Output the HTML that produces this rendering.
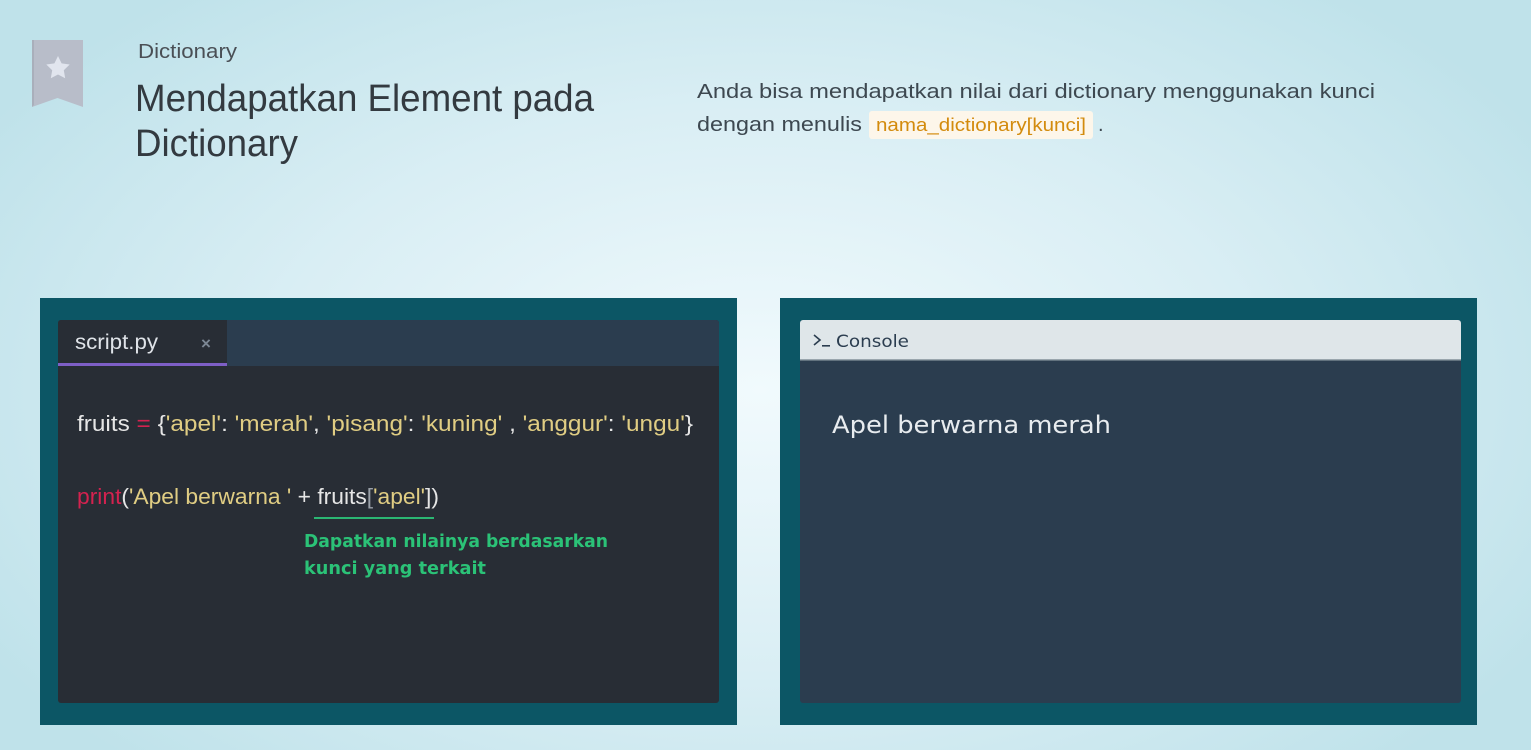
<!DOCTYPE html>
<html><head><meta charset="utf-8"><style>
html,body{margin:0;padding:0}
body{width:1531px;height:750px;overflow:hidden;position:relative;font-family:"Liberation Sans",sans-serif;
background:radial-gradient(ellipse 900px 520px at 760px 390px,#f1fafd 0%,#d9eef4 55%,#bfe2ea 100%);}
.abs{position:absolute}
</style></head><body>
<svg class="abs" style="left:0;top:0" width="1531" height="750">
  <!-- bookmark -->
  <path d="M32 40H83V107L57.5 98L32 107Z" fill="#b8bdc9"/>
  <path d="M32 40H34V105L32 107Z" fill="#a9afbb"/>
  <path d="M58 56l3.6 7.4 8.1 1.1-5.9 5.7 1.4 8.1-7.2-3.8-7.2 3.8 1.4-8.1-5.9-5.7 8.1-1.1z" fill="#e1e5ee"/>
  <text x="138" y="58" font-family="Liberation Sans" font-size="20" fill="#4a4f55" textLength="99" lengthAdjust="spacingAndGlyphs">Dictionary</text>
  <text x="135" y="111" font-family="Liberation Sans" font-size="38" fill="#333a40" textLength="459" lengthAdjust="spacingAndGlyphs">Mendapatkan Element pada</text>
  <text x="135" y="156" font-family="Liberation Sans" font-size="38" fill="#333a40" textLength="163" lengthAdjust="spacingAndGlyphs">Dictionary</text>
  <text x="697" y="98" font-family="Liberation Sans" font-size="20" fill="#3d4850" textLength="678" lengthAdjust="spacingAndGlyphs">Anda bisa mendapatkan nilai dari dictionary menggunakan kunci</text>
  <text x="697" y="131" font-family="Liberation Sans" font-size="20" fill="#3d4850" textLength="165" lengthAdjust="spacingAndGlyphs">dengan menulis</text>
  <rect x="869" y="111" width="224" height="28" rx="3" fill="#fdf6ea"/>
  <text x="876" y="131" font-family="Liberation Sans" font-size="18" fill="#d38b0d" textLength="210" lengthAdjust="spacingAndGlyphs">nama_dictionary[kunci]</text>
  <text x="1098" y="131" font-family="Liberation Sans" font-size="20" fill="#3d4850">.</text>

  <!-- left panel -->
  <rect x="40" y="298" width="697" height="427" fill="#0c5665"/>
  <rect x="58" y="320" width="661" height="383" rx="3" fill="#282d35"/>
  <path d="M61 320H716a3 3 0 0 1 3 3V366H58V323a3 3 0 0 1 3-3Z" fill="#2b3d4f"/>
  <path d="M61 320H227V366H58V323a3 3 0 0 1 3-3Z" fill="#282d35"/>
  <rect x="58" y="363" width="169" height="3" fill="#7e5fc6"/>
  <text x="75" y="349" font-family="Liberation Sans" font-size="21" fill="#dfe3e8" textLength="83" lengthAdjust="spacingAndGlyphs">script.py</text>
  <text x="201" y="349" font-family="Liberation Sans" font-size="17" font-weight="bold" fill="#7c8794">×</text>
  <text x="77" y="431" font-family="Liberation Sans" font-size="22" textLength="616" lengthAdjust="spacingAndGlyphs"><tspan fill="#e6e6e6">fruits </tspan><tspan fill="#d3224f">=</tspan><tspan fill="#e6e6e6"> {</tspan><tspan fill="#e0cd83">'apel'</tspan><tspan fill="#e6e6e6">: </tspan><tspan fill="#e0cd83">'merah'</tspan><tspan fill="#e6e6e6">, </tspan><tspan fill="#e0cd83">'pisang'</tspan><tspan fill="#e6e6e6">: </tspan><tspan fill="#e0cd83">'kuning'</tspan><tspan fill="#e6e6e6"> , </tspan><tspan fill="#e0cd83">'anggur'</tspan><tspan fill="#e6e6e6">: </tspan><tspan fill="#e0cd83">'ungu'</tspan><tspan fill="#e6e6e6">}</tspan></text>
  <text x="77" y="504" font-family="Liberation Sans" font-size="22" textLength="362" lengthAdjust="spacingAndGlyphs"><tspan fill="#d3224f">print</tspan><tspan fill="#e6e6e6">(</tspan><tspan fill="#e0cd83">'Apel berwarna '</tspan><tspan fill="#e6e6e6"> + fruits</tspan><tspan fill="#9aa0a8">[</tspan><tspan fill="#e0cd83">'apel'</tspan><tspan fill="#e6e6e6">])</tspan></text>
  <rect x="314" y="517" width="120" height="2" fill="#2bb673"/>
  <text x="304" y="547" font-family="DejaVu Sans" font-weight="bold" font-size="18" fill="#2bc277" textLength="304" lengthAdjust="spacingAndGlyphs">Dapatkan nilainya berdasarkan</text>
  <text x="304" y="574" font-family="DejaVu Sans" font-weight="bold" font-size="18" fill="#2bc277" textLength="182" lengthAdjust="spacingAndGlyphs">kunci yang terkait</text>

  <!-- right panel -->
  <rect x="780" y="298" width="697" height="427" fill="#0c5665"/>
  <rect x="800" y="320" width="661" height="383" rx="3" fill="#2b3d4f"/>
  <path d="M803 320H1458a3 3 0 0 1 3 3V360H800V323a3 3 0 0 1 3-3Z" fill="#dfe6e9"/>
  <rect x="800" y="359" width="661" height="1.5" fill="#9aa6ad"/>
  <path d="M814 335l6 5-6 5" stroke="#2b3d4f" stroke-width="1.6" fill="none"/>
  <rect x="822" y="345" width="8" height="1.6" fill="#2b3d4f"/>
  <text x="836" y="347" font-family="DejaVu Sans" font-size="17" fill="#2b3d4f" textLength="73" lengthAdjust="spacingAndGlyphs">Console</text>
  <text x="832" y="433" font-family="DejaVu Sans" font-size="24" fill="#e8ecef" textLength="279" lengthAdjust="spacingAndGlyphs">Apel berwarna merah</text>
</svg>
</body></html>
